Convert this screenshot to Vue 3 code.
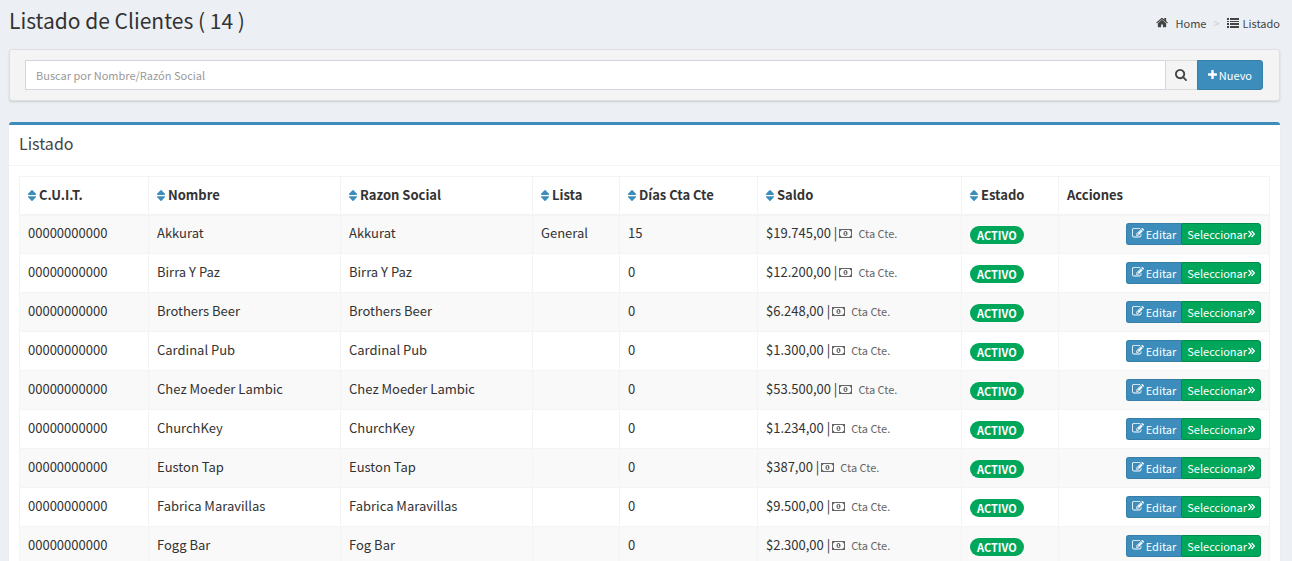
<script setup>
import { ref } from 'vue'

const search = ref('')

const columns = [
  { label: 'C.U.I.T.', key: 'cuit' },
  { label: 'Nombre', key: 'name' },
  { label: 'Razon Social', key: 'company' },
  { label: 'Lista', key: 'price-list' },
  { label: 'Días Cta Cte', key: 'days' },
  { label: 'Saldo', key: 'balance' },
  { label: 'Estado', key: 'status' }
]

const clients = [
  { name: 'Akkurat', company: 'Akkurat', list: 'General', days: 15, balance: '$19.745,00' },
  { name: 'Birra Y Paz', company: 'Birra Y Paz', list: '', days: 0, balance: '$12.200,00' },
  { name: 'Brothers Beer', company: 'Brothers Beer', list: '', days: 0, balance: '$6.248,00' },
  { name: 'Cardinal Pub', company: 'Cardinal Pub', list: '', days: 0, balance: '$1.300,00' },
  { name: 'Chez Moeder Lambic', company: 'Chez Moeder Lambic', list: '', days: 0, balance: '$53.500,00' },
  { name: 'ChurchKey', company: 'ChurchKey', list: '', days: 0, balance: '$1.234,00' },
  { name: 'Euston Tap', company: 'Euston Tap', list: '', days: 0, balance: '$387,00' },
  { name: 'Fabrica Maravillas', company: 'Fabrica Maravillas', list: '', days: 0, balance: '$9.500,00' },
  { name: 'Fogg Bar', company: 'Fog Bar', list: '', days: 0, balance: '$2.300,00' }
]
</script>

<template>
  <main class="page">
    <header class="page-header">
      <h1>Listado de Clientes ( 14 )</h1>
      <nav class="breadcrumb" aria-label="Ruta">
        <a href="#">
          <svg class="icon" viewBox="64 128 1664 1664" aria-hidden="true"><path d="M1472 992v480q0 26-19 45t-45 19h-384v-384h-256v384h-384q-26 0-45-19t-19-45v-480q0-1 .5-3t.5-3l575-474 575 474q1 2 1 6zm223-69l-62 74q-8 9-21 11h-3q-13 0-21-7l-692-577-692 577q-12 8-24 7-13-2-21-11l-62-74q-8-10-7-23.5t11-21.5l719-599q32-26 76-26t76 26l244 204v-195q0-14 9-23t23-9h192q14 0 23 9t9 23v408l219 182q10 8 11 21.5t-7 23.5z" /></svg>
          Home
        </a>
        <span class="separator">&gt;</span>
        <a href="#" class="current">
          <svg class="icon list-icon" viewBox="0 0 12 10" aria-hidden="true"><path d="M0 0h2v2H0zM3 0h9v2H3zM0 3h2v1H0zM3 3h9v1H3zM0 5h2v2H0zM3 5h9v2H3zM0 8h2v2H0zM3 8h9v2H3z" /></svg>
          Listado
        </a>
      </nav>
    </header>

    <form class="search-box" @submit.prevent>
      <input v-model="search" type="text" placeholder="Buscar por Nombre/Razón Social" aria-label="Buscar por Nombre/Razón Social">
      <button type="submit" class="search-button" aria-label="Buscar">
        <svg class="icon" viewBox="64 128 1664 1664" aria-hidden="true"><path d="M1216 832q0-185-131.5-316.5t-316.5-131.5-316.5 131.5-131.5 316.5 131.5 316.5 316.5 131.5 316.5-131.5 131.5-316.5zm512 832q0 52-38 90t-90 38q-54 0-90-38l-343-342q-179 124-399 124-143 0-273.5-55.5t-225-150-150-225-55.5-273.5 55.5-273.5 150-225 225-150 273.5-55.5 273.5 55.5 225 150 150 225 55.5 273.5q0 220-124 399l343 343q37 37 37 90z" /></svg>
      </button>
      <button type="button" class="new-button">
        <svg class="icon" viewBox="192 128 1408 1408" aria-hidden="true"><path d="M1600 736v192q0 40-28 68t-68 28h-416v416q0 40-28 68t-68 28h-192q-40 0-68-28t-28-68v-416h-416q-40 0-68-28t-28-68v-192q0-40 28-68t68-28h416v-416q0-40 28-68t68-28h192q40 0 68 28t28 68v416h416q40 0 68 28t28 68z" /></svg>
        Nuevo
      </button>
    </form>

    <section class="panel">
      <h2>Listado</h2>
      <div class="panel-body">
        <table>
          <colgroup>
            <col v-for="column in columns" :key="column.key" :class="column.key">
            <col class="actions-column">
          </colgroup>
          <thead>
            <tr>
              <th v-for="column in columns" :key="column.key" scope="col">
                <a href="#" class="sort" :aria-label="`Ordenar por ${column.label}`">
                  <svg viewBox="0 0 8 11" aria-hidden="true"><path d="M3.500.3a.7.7 0 0 1 1 0L7.900 3.800Q8.300 4.900 7.400 5H.6Q-.3 4.900.1 3.800zM.6 6.200h6.800q.9.1.5 1.100L4.500 10.700a.7.7 0 0 1-1 0L.1 7.300Q-.3 6.300.6 6.200z" /></svg>
                </a>
                {{ column.label }}
              </th>
              <th scope="col">Acciones</th>
            </tr>
          </thead>
          <tbody>
            <tr v-for="client in clients" :key="client.name">
              <td>00000000000</td>
              <td>{{ client.name }}</td>
              <td>{{ client.company }}</td>
              <td>{{ client.list }}</td>
              <td>{{ client.days }}</td>
              <td>
                <div class="balance-line">
                  <span>{{ client.balance }} |</span>
                  <a href="#" class="account">
                    <svg viewBox="0 0 13 9" aria-hidden="true"><path fill-rule="evenodd" d="M0 0h13v9H0zM2.400 1Q2.300 2.300 1 2.400v4.200q1.300.1 1.400 1.400h8.200q.1-1.300 1.400-1.400V2.400q-1.300-.1-1.400-1.400z" /><path fill-rule="evenodd" d="M6.500 2c1.300 0 2 1.100 2 2.500S7.800 7 6.500 7s-2-1.100-2-2.500.7-2.500 2-2.500zm-.2 1-.9.800.4.500.3-.200v1.300h-.6v.6h2v-.6h-.6V3z" /></svg>
                    Cta Cte.
                  </a>
                </div>
              </td>
              <td><span class="badge">ACTIVO</span></td>
              <td class="actions-cell">
                <div class="actions">
                  <button type="button" class="edit">
                    <svg class="icon" viewBox="0 128 1792 1792" aria-hidden="true"><path d="M888 1184l116-116-152-152-116 116v56h96v96h56zm440-720q-16-16-33 1l-350 350q-17 17-1 33t33-1l350-350q17-17 1-33zm80 594v190q0 119-84.5 203.5t-203.5 84.5h-832q-119 0-203.5-84.5t-84.5-203.5v-832q0-119 84.5-203.5t203.5-84.5h832q63 0 117 25 15 7 18 23 3 17-9 29l-49 49q-14 14-32 8-23-6-45-6h-832q-66 0-113 47t-47 113v832q0 66 47 113t113 47h832q66 0 113-47t47-113v-126q0-13 9-22l64-64q15-15 35-7t20 29zm-96-738l288 288-672 672h-288v-288zm444 132l-92 92-288-288 92-92q28-28 68-28t68 28l152 152q28 28 28 68t-28 68z" /></svg>
                    Editar
                  </button>
                  <button type="button" class="select">
                    Seleccionar
                    <svg class="chevrons" viewBox="0 0 7 8" aria-hidden="true"><path d="M.5 1 3.300 4 .5 7M3.500 1l2.800 3-2.800 3" /></svg>
                  </button>
                </div>
              </td>
            </tr>
          </tbody>
        </table>
      </div>
    </section>
  </main>
</template>

<style>
body {
  background: #ecf0f5;
  overflow: hidden;
}
</style>

<style scoped>
.page {
  height: 100vh;
  overflow: hidden;
  padding: 8px 12px 0 9px;
  color: #333;
  font-family: "Source Sans Pro", "Noto Sans CJK JP", sans-serif;
  font-size: 13px;
  line-height: 20px;
}

* {
  box-sizing: border-box;
}

a {
  color: inherit;
  text-decoration: none;
}

button,
input {
  margin: 0;
  font-family: inherit;
  font-size: 11px;
  line-height: 18px;
}

svg {
  flex: none;
  fill: currentColor;
}

.icon {
  width: 12px;
  height: 12px;
}

.page-header {
  display: flex;
  justify-content: space-between;
  height: 41px;
}

h1 {
  margin: 0;
  font-size: 21px;
  font-weight: 400;
  line-height: 24px;
}

.breadcrumb {
  display: flex;
  align-items: center;
  gap: 7px;
  height: 30px;
  color: #444;
  font-size: 11px;
}

.breadcrumb a {
  display: flex;
  align-items: center;
  gap: 7px;
}

.breadcrumb .current {
  gap: 4px;
}

.list-icon {
  height: 10px;
}

.separator {
  color: #ccc;
}

.search-box {
  display: flex;
  padding: 10px 16px 10px 15px;
  border: 1px solid #dddfe3;
  border-radius: 3px;
  background: #f4f4f4;
  box-shadow: 0 1px 2px rgba(0, 0, 0, 0.15);
}

.search-box input {
  flex: 1;
  min-width: 0;
  height: 30px;
  padding: 5px 10px;
  border: 1px solid #d2d6de;
  border-radius: 0;
  background: #fff;
  color: #555;
  outline: none;
}

.search-box input::placeholder {
  color: #999;
  opacity: 1;
}

.search-box button {
  display: flex;
  align-items: center;
  justify-content: center;
  height: 30px;
  border: 1px solid #ddd;
}

.search-box .search-button {
  width: 31px;
  padding: 0;
  border-width: 1px 0;
  background: #f4f4f4;
  color: #444;
}

.search-box .new-button {
  gap: 2px;
  padding: 0 10px 1px;
  border-color: #367fa9;
  border-radius: 0 3px 3px 0;
  background: #3c8dbc;
  color: #fff;
}

.new-button .icon {
  width: 9px;
  height: 9px;
}

.panel {
  margin-top: 21px;
  border-top: 3px solid #3c8dbc;
  border-radius: 3px;
  background: #fff;
  box-shadow: 0 1px 1px rgba(0, 0, 0, 0.1);
}

h2 {
  margin: 0;
  padding: 8px 10px 12px;
  border-bottom: 1px solid #f4f4f4;
  color: #444;
  font-size: 16px;
  font-weight: 400;
  line-height: 20px;
}

.panel-body {
  padding: 10px;
}

table {
  width: 100%;
  table-layout: fixed;
  border-collapse: collapse;
  border: 1px solid #f4f4f4;
}

.cuit { width: 10.32%; }
.name { width: 15.36%; }
.company { width: 15.36%; }
.price-list { width: 6.96%; }
.days { width: 11.04%; }
.balance { width: 16.32%; }
.status { width: 7.76%; }
.actions-column { width: 16.88%; }

th,
td {
  height: 39px;
  padding: 0 8px 2px;
  border: 1px solid #f4f4f4;
  text-align: left;
  vertical-align: middle;
  white-space: nowrap;
}

th {
  height: 38px;
  padding-bottom: 0;
  border-bottom-width: 2px;
  font-weight: 700;
}

tbody tr:nth-child(odd) {
  background: #f9f9f9;
}

.sort {
  color: #3c8dbc;
}

.sort svg {
  width: 8px;
  height: 11px;
  vertical-align: -1px;
}

.balance-line,
.account {
  display: flex;
  align-items: center;
}

.balance-line {
  gap: 2px;
}

.account {
  gap: 6px;
  color: #666;
  font-size: 11px;
}

.account svg {
  width: 13px;
  height: 9px;
}

.badge {
  display: block;
  width: fit-content;
  margin-top: 3px;
  padding: 0 7px;
  border-radius: 9px;
  background: #00a65a;
  color: #fff;
  font-size: 11px;
  font-weight: 700;
  line-height: 18px;
}

.actions-cell {
  padding-bottom: 0;
}

.actions {
  display: flex;
  justify-content: flex-end;
}

.actions button {
  display: flex;
  align-items: center;
  gap: 2px;
  height: 22px;
  padding: 0 5px 1px;
  border: 1px solid #367fa9;
  border-radius: 3px 0 0 3px;
  background: #3c8dbc;
  color: #fff;
}

.actions .edit {
  border-right: 0;
}

.actions .select {
  gap: 1px;
  border-color: #008d4c;
  border-radius: 0 3px 3px 0;
  background: #00a65a;
}

.chevrons {
  width: 7px;
  height: 8px;
  fill: none;
  stroke: currentColor;
  stroke-width: 1.3;
}
</style>
